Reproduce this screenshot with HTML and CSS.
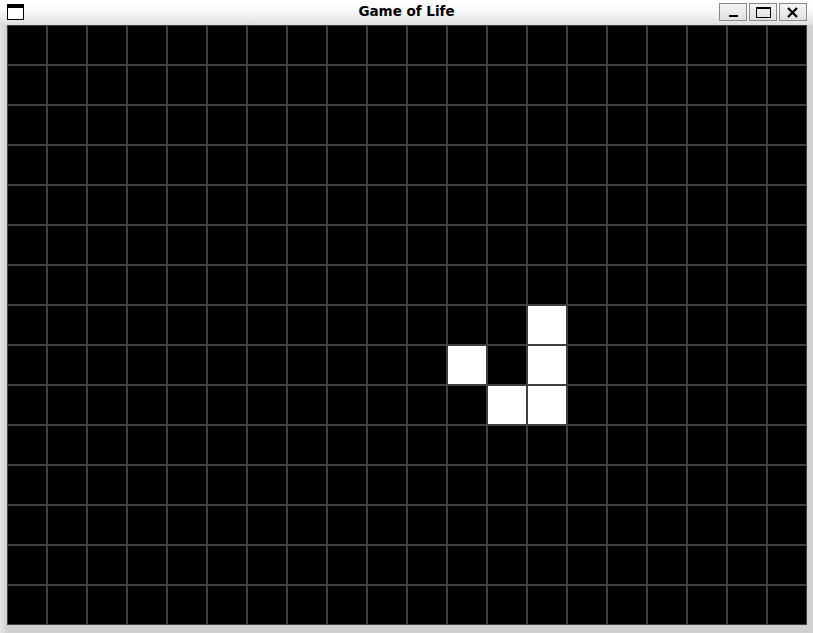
FILE: index.html
```html
<!DOCTYPE html>
<html>
<head>
<meta charset="utf-8">
<title>Game of Life</title>
<link rel="stylesheet" href="styles.css">
</head>
<body>
<div class="window">
  <div class="titlebar">
    <svg class="appicon" width="18" height="17" viewBox="0 0 18 17">
      <rect x="0.5" y="0.5" width="16" height="15" fill="#fff" stroke="#000"/>
      <rect x="0" y="0" width="17" height="4" fill="#000"/>
    </svg>
    <div class="title">Game of Life</div>
    <div class="buttons">
      <div class="btn"><svg width="26" height="16" viewBox="0 0 26 16"><rect x="9" y="11" width="9" height="2" fill="#000"/></svg></div>
      <div class="btn"><svg width="26" height="16" viewBox="0 0 26 16"><rect x="6.5" y="3.5" width="14" height="10" fill="none" stroke="#000"/><rect x="6" y="3" width="15" height="2" fill="#000"/></svg></div>
      <div class="btn"><svg width="26" height="16" viewBox="0 0 26 16"><path d="M8 4 L17 13 M17 4 L8 13" stroke="#000" stroke-width="2.2"/></svg></div>
    </div>
  </div>
  <div class="frame">
    <div class="board">
      <div class="c"></div><div class="c"></div><div class="c"></div><div class="c"></div><div class="c"></div><div class="c"></div><div class="c"></div><div class="c"></div><div class="c"></div><div class="c"></div><div class="c"></div><div class="c"></div><div class="c"></div><div class="c"></div><div class="c"></div><div class="c"></div><div class="c"></div><div class="c"></div><div class="c"></div><div class="c"></div>
      <div class="c"></div><div class="c"></div><div class="c"></div><div class="c"></div><div class="c"></div><div class="c"></div><div class="c"></div><div class="c"></div><div class="c"></div><div class="c"></div><div class="c"></div><div class="c"></div><div class="c"></div><div class="c"></div><div class="c"></div><div class="c"></div><div class="c"></div><div class="c"></div><div class="c"></div><div class="c"></div>
      <div class="c"></div><div class="c"></div><div class="c"></div><div class="c"></div><div class="c"></div><div class="c"></div><div class="c"></div><div class="c"></div><div class="c"></div><div class="c"></div><div class="c"></div><div class="c"></div><div class="c"></div><div class="c"></div><div class="c"></div><div class="c"></div><div class="c"></div><div class="c"></div><div class="c"></div><div class="c"></div>
      <div class="c"></div><div class="c"></div><div class="c"></div><div class="c"></div><div class="c"></div><div class="c"></div><div class="c"></div><div class="c"></div><div class="c"></div><div class="c"></div><div class="c"></div><div class="c"></div><div class="c"></div><div class="c"></div><div class="c"></div><div class="c"></div><div class="c"></div><div class="c"></div><div class="c"></div><div class="c"></div>
      <div class="c"></div><div class="c"></div><div class="c"></div><div class="c"></div><div class="c"></div><div class="c"></div><div class="c"></div><div class="c"></div><div class="c"></div><div class="c"></div><div class="c"></div><div class="c"></div><div class="c"></div><div class="c"></div><div class="c"></div><div class="c"></div><div class="c"></div><div class="c"></div><div class="c"></div><div class="c"></div>
      <div class="c"></div><div class="c"></div><div class="c"></div><div class="c"></div><div class="c"></div><div class="c"></div><div class="c"></div><div class="c"></div><div class="c"></div><div class="c"></div><div class="c"></div><div class="c"></div><div class="c"></div><div class="c"></div><div class="c"></div><div class="c"></div><div class="c"></div><div class="c"></div><div class="c"></div><div class="c"></div>
      <div class="c"></div><div class="c"></div><div class="c"></div><div class="c"></div><div class="c"></div><div class="c"></div><div class="c"></div><div class="c"></div><div class="c"></div><div class="c"></div><div class="c"></div><div class="c"></div><div class="c"></div><div class="c"></div><div class="c"></div><div class="c"></div><div class="c"></div><div class="c"></div><div class="c"></div><div class="c"></div>
      <div class="c"></div><div class="c"></div><div class="c"></div><div class="c"></div><div class="c"></div><div class="c"></div><div class="c"></div><div class="c"></div><div class="c"></div><div class="c"></div><div class="c"></div><div class="c"></div><div class="c"></div><div class="c live"></div><div class="c"></div><div class="c"></div><div class="c"></div><div class="c"></div><div class="c"></div><div class="c"></div>
      <div class="c"></div><div class="c"></div><div class="c"></div><div class="c"></div><div class="c"></div><div class="c"></div><div class="c"></div><div class="c"></div><div class="c"></div><div class="c"></div><div class="c"></div><div class="c live"></div><div class="c"></div><div class="c live"></div><div class="c"></div><div class="c"></div><div class="c"></div><div class="c"></div><div class="c"></div><div class="c"></div>
      <div class="c"></div><div class="c"></div><div class="c"></div><div class="c"></div><div class="c"></div><div class="c"></div><div class="c"></div><div class="c"></div><div class="c"></div><div class="c"></div><div class="c"></div><div class="c"></div><div class="c live"></div><div class="c live"></div><div class="c"></div><div class="c"></div><div class="c"></div><div class="c"></div><div class="c"></div><div class="c"></div>
      <div class="c"></div><div class="c"></div><div class="c"></div><div class="c"></div><div class="c"></div><div class="c"></div><div class="c"></div><div class="c"></div><div class="c"></div><div class="c"></div><div class="c"></div><div class="c"></div><div class="c"></div><div class="c"></div><div class="c"></div><div class="c"></div><div class="c"></div><div class="c"></div><div class="c"></div><div class="c"></div>
      <div class="c"></div><div class="c"></div><div class="c"></div><div class="c"></div><div class="c"></div><div class="c"></div><div class="c"></div><div class="c"></div><div class="c"></div><div class="c"></div><div class="c"></div><div class="c"></div><div class="c"></div><div class="c"></div><div class="c"></div><div class="c"></div><div class="c"></div><div class="c"></div><div class="c"></div><div class="c"></div>
      <div class="c"></div><div class="c"></div><div class="c"></div><div class="c"></div><div class="c"></div><div class="c"></div><div class="c"></div><div class="c"></div><div class="c"></div><div class="c"></div><div class="c"></div><div class="c"></div><div class="c"></div><div class="c"></div><div class="c"></div><div class="c"></div><div class="c"></div><div class="c"></div><div class="c"></div><div class="c"></div>
      <div class="c"></div><div class="c"></div><div class="c"></div><div class="c"></div><div class="c"></div><div class="c"></div><div class="c"></div><div class="c"></div><div class="c"></div><div class="c"></div><div class="c"></div><div class="c"></div><div class="c"></div><div class="c"></div><div class="c"></div><div class="c"></div><div class="c"></div><div class="c"></div><div class="c"></div><div class="c"></div>
      <div class="c"></div><div class="c"></div><div class="c"></div><div class="c"></div><div class="c"></div><div class="c"></div><div class="c"></div><div class="c"></div><div class="c"></div><div class="c"></div><div class="c"></div><div class="c"></div><div class="c"></div><div class="c"></div><div class="c"></div><div class="c"></div><div class="c"></div><div class="c"></div><div class="c"></div><div class="c"></div>
    </div>
  </div>
</div>
</body>
</html>
```

FILE: styles.css
```css
html, body {
  margin: 0;
  padding: 0;
  background: #d4d4d4;
}
.window {
  width: 813px;
  height: 633px;
  display: flex;
  flex-direction: column;
  background: #d4d4d4;
  overflow: hidden;
}
.titlebar {
  height: 25px;
  flex: none;
  display: grid;
  grid-template-columns: 1fr auto 1fr;
  align-items: start;
  background: linear-gradient(#ffffff 0px, #fafafa 10px, #e6e6e6 22px, #dcdcdc 25px);
  box-sizing: border-box;
}
.appicon {
  margin: 4px 0 0 7px;
  display: block;
  justify-self: start;
}
.title {
  text-align: center;
  font-family: "DejaVu Sans", sans-serif;
  font-weight: bold;
  font-size: 13.5px;
  line-height: 22px;
  color: #000;
}
.buttons {
  justify-self: end;
  display: flex;
  gap: 2px;
  margin: 3px 6px 0 0;
}
.btn {
  width: 28px;
  height: 18px;
  box-sizing: border-box;
  border: 1px solid #8a8a8a;
  background: linear-gradient(#f4f4f4, #e0e0e0);
  display: flex;
  align-items: center;
  justify-content: center;
}
.btn svg { display: block; }
.frame {
  flex: 1;
  padding: 0 6px 8px 7px;
  background: linear-gradient(90deg, #e4e4e4 0px, #d0d0d0 7px);
}
.board {
  display: grid;
  grid-template-columns: repeat(20, 40px);
  grid-template-rows: repeat(15, 40px);
  width: 800px;
  height: 600px;
  background: #000;
}
.c {
  box-sizing: border-box;
  border: 1px solid #404040;
  background: #000;
}
.c.live {
  background: #fff;
}
```
